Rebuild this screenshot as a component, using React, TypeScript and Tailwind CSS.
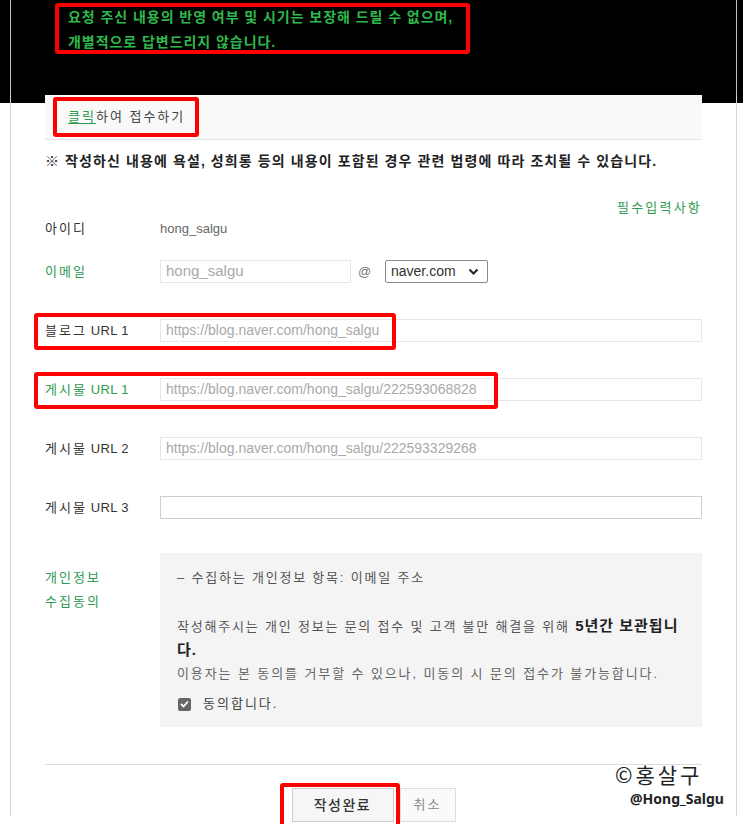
import React from 'react';

const green = 'text-[#2e9b4f]';

function Field({ label, isGreen, children }: { label: React.ReactNode; isGreen?: boolean; children: React.ReactNode }) {
  return (
    <div className="flex items-center h-[23px]">
      <div className={`w-[115px] shrink-0 text-[13px] tracking-[2px] ${isGreen ? 'text-[#2e9b4f]' : 'text-[#333]'}`}>{label}</div>
      <div className="flex-1 flex items-center">{children}</div>
    </div>
  );
}

function UrlLabel({ ko, n }: { ko: string; n: number }) {
  return (
    <>
      {ko}
      <span className="tracking-[0.3px]"> URL {n}</span>
    </>
  );
}

function TextBox({ value, dark, className }: { value?: string; dark?: boolean; className?: string }) {
  return (
    <div
      className={`h-[23px] flex items-center px-[5px] bg-white text-[14px] text-[#a9a9a9] border ${
        dark ? 'border-[#cfcfcf]' : 'border-[#e6e6e6]'
      } ${className ?? 'flex-1'}`}
    >
      {value}
    </div>
  );
}

function RedBox({ className }: { className: string }) {
  return <div className={`absolute border-4 border-[#ff0000] rounded-[3px] pointer-events-none ${className}`} />;
}

export default function App() {
  return (
    <div className="relative w-[743px] h-[824px] overflow-hidden bg-white font-['Liberation_Sans','Noto_Sans_CJK_KR',sans-serif] text-[#333]">
      {/* black notice band */}
      <div className="bg-black">
        <div className="ml-[10px] mr-[6px] h-[103px] border-x border-[#bdbdbd] pl-[57px] pt-[5px]">
          <p className="text-[14px] leading-[25px] font-bold tracking-[0.95px] text-[#2fb84c]">
            요청 주신 내용의 반영 여부 및 시기는 보장해 드릴 수 없으며,
            <br />
            개별적으로 답변드리지 않습니다.
          </p>
        </div>
      </div>

      <div className="ml-[10px] mr-[6px] h-[721px] border-x border-[#d6d6d6] px-[34px]">
        <div className="relative -mt-[8px] h-[45px] flex items-center pl-[23px] bg-[#f9f9f9] border-b border-[#e4e4e4] text-[13px] tracking-[2px] text-[#444]">
          <span className={`${green} underline underline-offset-2`}>클릭</span>하여 접수하기
        </div>

        <p className="mt-[11px] text-[14px] leading-[20px] font-bold tracking-[1.1px] text-[#222] whitespace-nowrap">
          ※ 작성하신 내용에 욕설, 성희롱 등의 내용이 포함된 경우 관련 법령에 따라 조치될 수 있습니다.
        </p>

        <div className={`mt-[28px] text-right text-[13px] leading-[18px] tracking-[2.2px] ${green}`}>필수입력사항</div>

        <div className="flex flex-col">
          <Field label="아이디">
            <span className="text-[13px] tracking-normal text-[#666]">hong_salgu</span>
          </Field>
          <div className="mt-[20px]">
            <Field label="이메일" isGreen>
              <TextBox value="hong_salgu" className="w-[191px] !text-[15px]" />
              <span className="w-[34px] pl-[7px] text-[13px] text-[#777]">@</span>
              <div className="h-[23px] w-[103px] flex items-center justify-between px-[5px] border border-[#8a8a8a] rounded-[2px] bg-white text-[14px] tracking-normal text-[#333]">
                naver.com
                <svg width="11" height="8" viewBox="0 0 11 8" className="mr-[3px]">
                  <path d="M1.5 1.5 L5.5 5.5 L9.5 1.5" fill="none" stroke="#222" strokeWidth="2" />
                </svg>
              </div>
            </Field>
          </div>
          <div className="mt-[36px]">
            <Field label={<UrlLabel ko="블로그" n={1} />}>
              <TextBox value="https://blog.naver.com/hong_salgu" />
            </Field>
          </div>
          <div className="mt-[36px]">
            <Field label={<UrlLabel ko="게시물" n={1} />} isGreen>
              <TextBox value="https://blog.naver.com/hong_salgu/222593068828" />
            </Field>
          </div>
          <div className="mt-[36px]">
            <Field label={<UrlLabel ko="게시물" n={2} />}>
              <TextBox value="https://blog.naver.com/hong_salgu/222593329268" />
            </Field>
          </div>
          <div className="mt-[36px]">
            <Field label={<UrlLabel ko="게시물" n={3} />}>
              <TextBox dark />
            </Field>
          </div>
        </div>

        <div className="mt-[34px] flex">
          <div className={`w-[115px] shrink-0 pt-[13px] text-[13px] leading-[24px] tracking-[2px] ${green}`}>
            개인정보
            <br />
            수집동의
          </div>
          <div className="flex-1 h-[174px] bg-[#f4f4f4] pl-[17px] pt-[15px] text-[13px] text-[#555]">
            <p className="leading-[20px] tracking-[1.8px]">– 수집하는 개인정보 항목: 이메일 주소</p>
            <p className="mt-[26px] leading-[23px] whitespace-nowrap tracking-[1.8px]">
              작성해주시는 개인 정보는 문의 접수 및 고객 불만 해결을 위해{' '}
              <b className="text-[15px] tracking-[1px] text-[#222]">5년간 보관됩니</b>
              <br />
              <b className="text-[15px] tracking-[1px] text-[#222]">다.</b>
            </p>
            <p className="leading-[23px] tracking-[1.9px] text-[#666] whitespace-nowrap">
              이용자는 본 동의를 거부할 수 있으나, 미동의 시 문의 접수가 불가능합니다.
            </p>
            <label className="mt-[9px] flex items-center gap-[12px] h-[20px]">
              <span className="ml-[1px] w-[13px] h-[13px] rounded-[2px] bg-[#666] flex items-center justify-center">
                <svg width="9" height="8" viewBox="0 0 9 8">
                  <path d="M1 4 L3.5 6.5 L8 1.5" fill="none" stroke="#fff" strokeWidth="1.8" />
                </svg>
              </span>
              <span className="text-[13px] tracking-[2px] text-[#444]">동의합니다.</span>
            </label>
          </div>
        </div>

        <div className="mt-[37px] border-t border-[#dcdcdc]" />

        <div className="mt-[23px] flex justify-center gap-[6px]">
          <button className="w-[102px] h-[34px] bg-[#f6f6f6] border border-[#cdcdcd] text-[14px] font-medium tracking-[1.5px] text-[#333]">
            작성완료
          </button>
          <button className="w-[56px] h-[34px] bg-[#fafafa] border border-[#dedede] text-[13px] tracking-[2px] text-[#888]">
            취소
          </button>
        </div>
      </div>

      {/* watermark */}
      <div className="absolute left-[615px] top-[761px] text-[21px] leading-[26px] tracking-[3px] text-[#222] font-['Noto_Sans_CJK_KR',sans-serif]">
        ©홍살구
      </div>
      <div className="absolute left-[630px] top-[790px] text-[14px] leading-[18px] font-bold text-[#222] font-['Noto_Sans',sans-serif]">
        @Hong_Salgu
      </div>

      {/* red annotation boxes */}
      <RedBox className="left-[55px] top-[3px] w-[415px] h-[51px]" />
      <RedBox className="left-[53px] top-[97px] w-[146px] h-[40px]" />
      <RedBox className="left-[34px] top-[313px] w-[362px] h-[37px]" />
      <RedBox className="left-[34px] top-[372px] w-[464px] h-[37px]" />
      <RedBox className="left-[280px] top-[783px] w-[120px] h-[45px]" />
    </div>
  );
}
